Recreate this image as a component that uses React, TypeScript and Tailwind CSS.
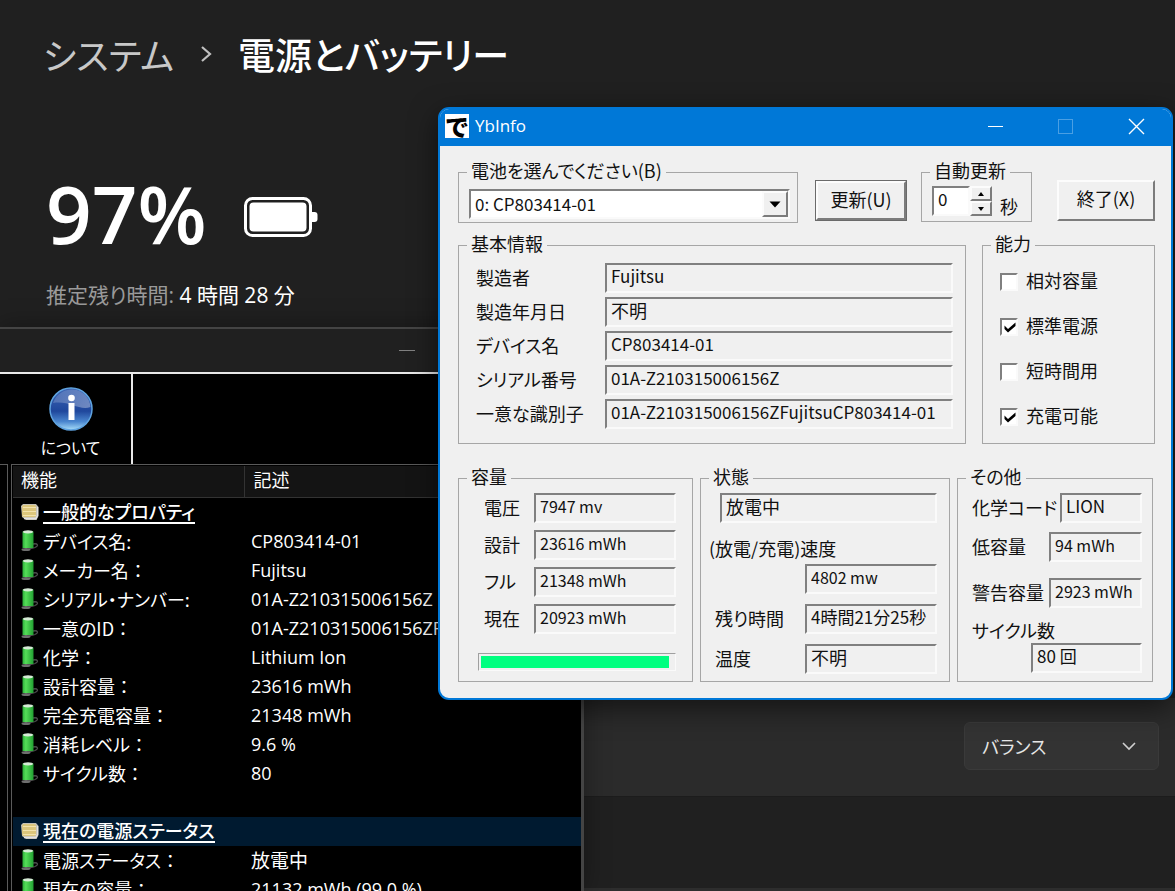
import { useId, useState } from "react";
import type { ReactNode } from "react";

/* ---------- Settings page behind the windows ---------- */

function BatteryIcon() {
  return (
    <svg width="74" height="42" viewBox="0 0 74 42" aria-hidden="true">
      <rect x="1.5" y="2.5" width="65" height="37" rx="7" fill="none" stroke="#fff" strokeWidth="3" />
      <rect x="5.5" y="6.5" width="57" height="29" rx="4" fill="#fff" />
      <path d="M68 16h2.500a3 3 0 0 1 3 3v4a3 3 0 0 1-3 3H68z" fill="#fff" />
    </svg>
  );
}

function SettingsPage() {
  return (
    <main className="flex h-full flex-col bg-[#202020] text-white">
      <header className="flex h-[108px] items-center gap-[26px] pl-[43px] leading-none">
        <a href="#system" className="text-[36px] text-[#c8c8c8]">システム</a>
        <svg width="12" height="18" viewBox="0 0 12 18" fill="none" stroke="#c0c0c0" strokeWidth="2.200" aria-hidden="true">
          <path d="M2 2l8 7-8 7" />
        </svg>
        <h1 className="text-[37px] font-medium">電源とバッテリー</h1>
      </header>
      <section className="flex flex-col pt-[56px] pl-[46px]">
        <div className="flex items-center gap-[37px]">
          <span className="pb-[8px] font-['Open_Sans',sans-serif] text-[80px] leading-[98px] font-semibold">97%</span>
          <BatteryIcon />
        </div>
        <p className="mt-[10px] font-['Open_Sans','Noto_Sans_CJK_JP',sans-serif] text-[21px] leading-[30px]">
          <span className="text-[#9a9a9a]">推定残り時間:</span> 4 時間 28 分
        </p>
      </section>
      <section className="mt-auto flex justify-end bg-[#2b2b2b] pt-[24px] pr-[16px] pb-[26px]">
        <label className="relative block">
          <span className="sr-only">電源モード</span>
          <select className="h-[48px] w-[195px] appearance-none rounded-[6px] border border-[#3a3a3a] bg-[#333333] pl-[17px] text-[18px] text-[#e6e6e6]">
            <option>バランス</option>
          </select>
          <svg className="pointer-events-none absolute top-[19px] right-[23px]" width="14" height="10" viewBox="0 0 14 10" fill="none" stroke="#d0d0d0" strokeWidth="1.600" aria-hidden="true">
            <path d="M1 2l6 6 6-6" />
          </svg>
        </label>
      </section>
      <div className="h-[92px] shrink-0 border-t border-[#1c1c1c]" />
      <div className="h-[3px] shrink-0 bg-[#2d2d2d]" />
    </main>
  );
}

/* ---------- Battery property list window ---------- */

function InfoIcon() {
  return (
    <svg width="44" height="44" viewBox="0 0 44 44" aria-hidden="true">
      <defs>
        <linearGradient id="infoBody" x1="0" y1="0" x2="0" y2="1">
          <stop offset="0" stopColor="#3f66b4" />
          <stop offset="0.550" stopColor="#1f479c" />
          <stop offset="0.800" stopColor="#4a86cf" />
          <stop offset="1" stopColor="#a8defa" />
        </linearGradient>
        <linearGradient id="infoGloss" x1="0" y1="0" x2="1" y2="1">
          <stop offset="0" stopColor="#fff" stopOpacity="0.100" />
          <stop offset="1" stopColor="#fff" stopOpacity="0.350" />
        </linearGradient>
      </defs>
      <circle cx="22" cy="22" r="21" fill="url(#infoBody)" stroke="#5fa3e0" strokeWidth="1.500" />
      <path d="M4 16C8 5 18 2 24 2.500 34 3 41 11 41.500 20 30 24 20 13 4 16z" fill="url(#infoGloss)" />
      <circle cx="22.500" cy="11" r="3.300" fill="#fff" />
      <rect x="19.500" y="16" width="6" height="17" fill="#fff" />
    </svg>
  );
}

function GroupIcon() {
  return (
    <svg width="20" height="18" viewBox="0 0 20 18" aria-hidden="true">
      <path d="M3 1h13l2.500 3v9l-2 4H6l-4-3-1-11z" fill="#c4c1b6" />
      <rect x="2" y="2" width="14" height="12" rx="2" fill="#dcc67c" />
      <path d="M3 4.500h13M3 8.500h13M3 12.500h13" stroke="#f3e3ac" strokeWidth="1.200" />
      <path d="M4 15.500h12l1.500-3V4" fill="none" stroke="#e2e2e2" strokeWidth="1.300" />
    </svg>
  );
}

function CellIcon() {
  return (
    <svg width="20" height="24" viewBox="0 0 20 24" aria-hidden="true">
      <defs>
        <linearGradient id="cellBody" x1="0" y1="0" x2="1" y2="0">
          <stop offset="0" stopColor="#2cae3a" />
          <stop offset="0.300" stopColor="#55dd58" />
          <stop offset="1" stopColor="#22a032" />
        </linearGradient>
      </defs>
      <path d="M13 15c5-1 6 2 2 3.500-3 1-6 1-9 2.500" fill="none" stroke="#4c4c4c" strokeWidth="1.300" />
      <ellipse cx="6" cy="20.500" rx="4.500" ry="1.500" fill="#6e6e6e" />
      <rect x="2.500" y="2.500" width="11" height="16.500" fill="url(#cellBody)" />
      <ellipse cx="8" cy="2.800" rx="5" ry="1.600" fill="#d6ead6" />
    </svg>
  );
}

type Row = { kind: "group" | "item" | "blank"; name?: string; value?: string; cjk?: boolean; selected?: boolean };

const rows: Row[] = [
  { kind: "group", name: "一般的なプロパティ" },
  { kind: "item", name: "デバイス名:", value: "CP803414-01" },
  { kind: "item", name: "メーカー名：", value: "Fujitsu" },
  { kind: "item", name: "シリアル・ナンバー:", value: "01A-Z210315006156Z" },
  { kind: "item", name: "一意のID：", value: "01A-Z210315006156ZFujitsuCP803414-01" },
  { kind: "item", name: "化学：", value: "Lithium Ion" },
  { kind: "item", name: "設計容量：", value: "23616 mWh" },
  { kind: "item", name: "完全充電容量：", value: "21348 mWh" },
  { kind: "item", name: "消耗レベル：", value: "9.6 %" },
  { kind: "item", name: "サイクル数：", value: "80" },
  { kind: "blank" },
  { kind: "group", name: "現在の電源ステータス", selected: true },
  { kind: "item", name: "電源ステータス：", value: "放電中", cjk: true },
  { kind: "item", name: "現在の容量：", value: "21132 mWh (99.0 %)" },
];

/* The full-width colon keeps its whole cell, unlike the proportional kana before it. */
function RowName({ name }: { name: string }) {
  if (!name.endsWith("：")) return <>{name}</>;
  return (
    <>
      {name.slice(0, -1)}
      <span className="[font-feature-settings:normal]">：</span>
    </>
  );
}

function PropertyWindow() {
  return (
    <section className="absolute top-[327px] bottom-0 left-0 flex w-[584px] flex-col overflow-hidden border-t-2 border-r-[3px] border-[#444444] bg-black text-white shadow-[0_0_24px_rgba(0,0,0,0.35)]">
      <div className="flex h-[43px] shrink-0 items-center justify-end bg-[#202020] pr-[166px]">
        <button aria-label="最小化" className="flex h-full w-[16px] items-center">
          <span className="h-px w-full bg-[#808080]" />
        </button>
      </div>
      <div className="flex h-[92px] shrink-0 border-t-2 border-[#e8e8e8]">
        <button className="flex w-[133px] flex-col items-center border-r-2 border-[#e8e8e8] pt-[13px] pl-[10px] text-[16px]">
          <InfoIcon />
          <span className="leading-[32px]">について</span>
        </button>
      </div>
      <div className="flex min-h-0 grow">
        <div className="mr-[3px] w-[8px] shrink-0 border-t border-r border-[#5a5a5a]" />
        <div className="grow overflow-hidden border-t border-l border-[#5a5a5a] pt-px pl-px">
          <table className="w-full table-fixed border-collapse text-left">
            <thead className="bg-[#141414]">
              <tr className="h-[31px] border-b border-[#333333] text-[18px] leading-[24px]">
                <th className="w-[231px] border-r border-[#333333] pb-[4px] pl-[8px] font-normal">機能</th>
                <th className="pb-[4px] pl-[9px] font-normal">記述</th>
              </tr>
            </thead>
            <tbody>
              {rows.map((r, i) => (
                <tr key={i} className={r.selected ? "h-[29px] bg-[#001a30]" : "h-[29px]"}>
                  <td className="p-0 pl-[7px] whitespace-nowrap">
                    {r.name && (
                      <span className="flex h-[29px] items-center gap-[3px] text-[18px] leading-[28px]">
                        {r.kind === "group" ? <GroupIcon /> : <CellIcon />}
                        <span className={r.kind === "group" ? "border-b-2 border-white leading-[21px] font-medium" : ""}>
                          <RowName name={r.name} />
                        </span>
                      </span>
                    )}
                  </td>
                  <td className={r.cjk ? "p-0 pl-[7px] text-[19px] leading-[28px] whitespace-nowrap" : "overflow-hidden p-0 pl-[7px] font-['Open_Sans',sans-serif] text-[18px] leading-[28px] whitespace-nowrap"}>
                    {r.value}
                  </td>
                </tr>
              ))}
            </tbody>
          </table>
        </div>
      </div>
    </section>
  );
}

/* ---------- YbInfo dialog ---------- */

function Group({ title, className, children }: { title: string; className: string; children: ReactNode }) {
  return (
    <fieldset className={`min-w-0 border border-[#a6a6a6] ${className}`}>
      <legend className="ml-[8px] px-[4px] pb-[3px] leading-[21px]">{title}</legend>
      {children}
    </fieldset>
  );
}

const sunken = "border-2 border-t-[#808080] border-l-[#808080] border-r-[#fafafa] border-b-[#fafafa]";
const raised = "border-2 border-t-[#fcfcfc] border-l-[#fcfcfc] border-r-[#7c7c7c] border-b-[#7c7c7c]";

const fieldText = { sm: "text-[16px]", md: "text-[17px]", lg: "text-[18px]" };
type FieldText = keyof typeof fieldText;

function Field({ id, value, label, size = "sm", className }: { id?: string; value: string; label?: string; size?: FieldText; className: string }) {
  return (
    <input
      id={id}
      aria-label={label}
      readOnly
      value={value}
      className={`${sunken} h-[30px] min-w-0 bg-[#f0f0f0] pb-[5px] pl-[4px] ${fieldText[size]} ${className}`}
    />
  );
}

function LabelledField({ label, value, size, width }: { label: string; value: string; size?: FieldText; width: string }) {
  const id = useId();
  return (
    <div className="flex h-[30px] items-center justify-between">
      <label htmlFor={id} className="pb-[2px] leading-[26px] whitespace-nowrap">{label}</label>
      <Field id={id} value={value} size={size} className={width} />
    </div>
  );
}

function Check({ label, initial }: { label: string; initial: boolean }) {
  const [on, setOn] = useState(initial);
  return (
    <label className="flex h-[45px] items-center gap-[8px]">
      <span className="relative flex">
        <input
          type="checkbox"
          checked={on}
          onChange={() => setOn(!on)}
          className={`${sunken} size-[18px] appearance-none bg-white`}
        />
        {on && (
          <svg className="pointer-events-none absolute top-[4px] left-[4px]" width="12" height="11" viewBox="0 0 12 11" aria-hidden="true">
            <path d="M0.500 3.500v3.500L4 10.500 11.500 4V0.500L4 7z" fill="#000" />
          </svg>
        )}
      </span>
      <span className="pb-[3px]">{label}</span>
    </label>
  );
}

function TitleBar() {
  return (
    <div className="flex h-[37px] items-center bg-[#0078d7] pb-[3px] pl-[5px] text-white">
      <span className="flex size-[24px] items-center justify-center overflow-hidden bg-white text-[24px] leading-none font-black text-black">で</span>
      <h2 className="grow pl-[6px] font-['Open_Sans',sans-serif] text-[17px]">YbInfo</h2>
      <div className="flex items-center gap-[55px] pr-[26px]">
        <button aria-label="最小化" className="flex h-[16px] w-[15px] items-center">
          <span className="h-px w-full bg-white" />
        </button>
        <button aria-label="最大化" disabled className="size-[15px] border border-[#4a9fe3]" />
        <button aria-label="閉じる">
          <svg width="17" height="17" viewBox="0 0 17 17" stroke="#fff" strokeWidth="1.400" aria-hidden="true">
            <path d="M1 1l15 15M16 1L1 16" />
          </svg>
        </button>
      </div>
    </div>
  );
}

function YbInfoWindow() {
  const [seconds, setSeconds] = useState(0);
  const step = (n: number) => setSeconds((s) => Math.max(0, s + n));
  return (
    <section className="absolute top-[107px] left-[438px] w-[735px] overflow-hidden rounded-[11px] border-2 border-[#0078d7] bg-[#f0f0f0] text-[18px] text-[#111111] shadow-[0_8px_28px_rgba(0,0,0,0.55)]">
      <TitleBar />
      <div className="flex flex-col pt-[14px] pr-[16px] pb-[16px] pl-[18px]">
        <div className="flex">
          <Group title="電池を選んでください(B)" className="h-[63px] grow">
            <div className="relative mt-[5px] mr-[7px] ml-[10px]">
              <select aria-label="電池" className={`${sunken} block h-[30px] w-full appearance-none bg-white pb-[2px] pl-[4px] text-[17px]`}>
                <option>0: CP803414-01</option>
              </select>
              <span className={`${raised} pointer-events-none absolute top-[2px] right-[2px] flex h-[26px] w-[26px] items-center justify-center bg-[#f0f0f0]`}>
                <svg width="12" height="7" viewBox="0 0 12 7" aria-hidden="true"><path d="M0.500 0.500h11L6 6.500z" /></svg>
              </span>
            </div>
          </Group>
          <button className="mt-[20px] ml-[17px] h-[41px] w-[92px] border border-[#6a6a6a]">
            <span className={`${raised} flex h-full items-center justify-center pb-[3px]`}>更新(U)</span>
          </button>
          <Group title="自動更新" className="ml-[14px] h-[62px] w-[111px]">
            <div className="flex pt-[2px] pl-[10px]">
              <input
                aria-label="自動更新の間隔"
                value={seconds}
                onChange={(e) => setSeconds(Number(e.target.value) || 0)}
                className={`${sunken} h-[30px] w-[38px] bg-white pb-[6px] pl-[4px] text-[17px]`}
              />
              <span className="flex w-[22px] flex-col">
                <button aria-label="増やす" onClick={() => step(1)} className={`${raised} flex h-[15px] items-center justify-center`}>
                  <svg width="6" height="4" viewBox="0 0 6 4" aria-hidden="true"><path d="M3 0l3 4H0z" /></svg>
                </button>
                <button aria-label="減らす" onClick={() => step(-1)} className={`${raised} flex h-[15px] items-center justify-center`}>
                  <svg width="6" height="4" viewBox="0 0 6 4" aria-hidden="true"><path d="M3 4l3-4H0z" /></svg>
                </button>
              </span>
              <span className="pt-[8px] pl-[8px] leading-[24px]">秒</span>
            </div>
          </Group>
          <button className={`${raised} mt-[20px] ml-[25px] h-[41px] w-[98px] pb-[4px]`}>終了(X)</button>
        </div>

        <div className="mt-[10px] flex gap-[16px]">
          <Group title="基本情報" className="h-[211px] grow">
            <div className="flex flex-col gap-[4px] pt-[6px] pr-[12px] pl-[17px]">
              <LabelledField label="製造者" value="Fujitsu" size="md" width="w-[348px]" />
              <LabelledField label="製造年月日" value="不明" size="lg" width="w-[348px]" />
              <LabelledField label="デバイス名" value="CP803414-01" size="md" width="w-[348px]" />
              <LabelledField label="シリアル番号" value="01A-Z210315006156Z" size="md" width="w-[348px]" />
              <LabelledField label="一意な識別子" value="01A-Z210315006156ZFujitsuCP803414-01" size="md" width="w-[348px]" />
            </div>
          </Group>
          <Group title="能力" className="h-[211px] w-[173px]">
            <div className="pt-[2px] pl-[17px]">
              <Check label="相対容量" initial={false} />
              <Check label="標準電源" initial={true} />
              <Check label="短時間用" initial={false} />
              <Check label="充電可能" initial={true} />
            </div>
          </Group>
        </div>

        <div className="mt-[22px] mr-[2px] grid grid-cols-[235fr_250fr_196fr] gap-[7px]">
          <Group title="容量" className="h-[216px]">
            <div className="flex flex-col gap-[7px] pt-[3px] pr-[16px] pl-[25px]">
              <LabelledField label="電圧" value="7947 mv" width="w-[142px]" />
              <LabelledField label="設計" value="23616 mWh" width="w-[142px]" />
              <LabelledField label="フル" value="21348 mWh" width="w-[142px]" />
              <LabelledField label="現在" value="20923 mWh" width="w-[142px]" />
            </div>
            <div role="progressbar" aria-label="充電量" aria-valuenow={97} className="mt-[19px] mr-[16px] ml-[19px] h-[18px] border border-t-[#a0a0a0] border-r-[#fafafa] border-b-[#fafafa] border-l-[#a0a0a0] p-[2px]">
              <div className="h-full bg-[#00ff7f]" style={{ width: "98%" }} />
            </div>
          </Group>
          <Group title="状態" className="h-[216px]">
            <div className="pt-[3px] pr-[12px] pl-[8px]">
              <Field label="状態" value="放電中" size="lg" className="ml-[11px] block w-[217px]" />
              <label htmlFor="rate" className="mt-[12px] mb-[3px] block leading-[26px]">(放電/充電)速度</label>
              <Field id="rate" value="4802 mw" className="ml-auto block w-[132px]" />
              <div className="flex flex-col gap-[10px] pt-[10px] pl-[6px]">
                <LabelledField label="残り時間" value="4時間21分25秒" size="md" width="w-[132px]" />
                <LabelledField label="温度" value="不明" size="lg" width="w-[132px]" />
              </div>
            </div>
          </Group>
          <Group title="その他" className="h-[216px]">
            <div className="pt-[3px] pr-[10px] pl-[14px]">
              <LabelledField label="化学コード" value="LION" size="md" width="w-[82px]" />
              <div className="mt-[9px] mb-[16px]">
                <LabelledField label="低容量" value="94 mWh" width="w-[93px]" />
              </div>
              <LabelledField label="警告容量" value="2923 mWh" width="w-[93px]" />
              <label htmlFor="cycles" className="mt-[9px] block leading-[26px]">サイクル数</label>
              <Field id="cycles" value="80 回" size="md" className="ml-auto block w-[111px]" />
            </div>
          </Group>
        </div>
      </div>
    </section>
  );
}

export default function App() {
  return (
    <div className="relative h-screen overflow-hidden font-['Noto_Sans_CJK_JP',sans-serif] [font-feature-settings:'palt']">
      <SettingsPage />
      <PropertyWindow />
      <YbInfoWindow />
    </div>
  );
}
